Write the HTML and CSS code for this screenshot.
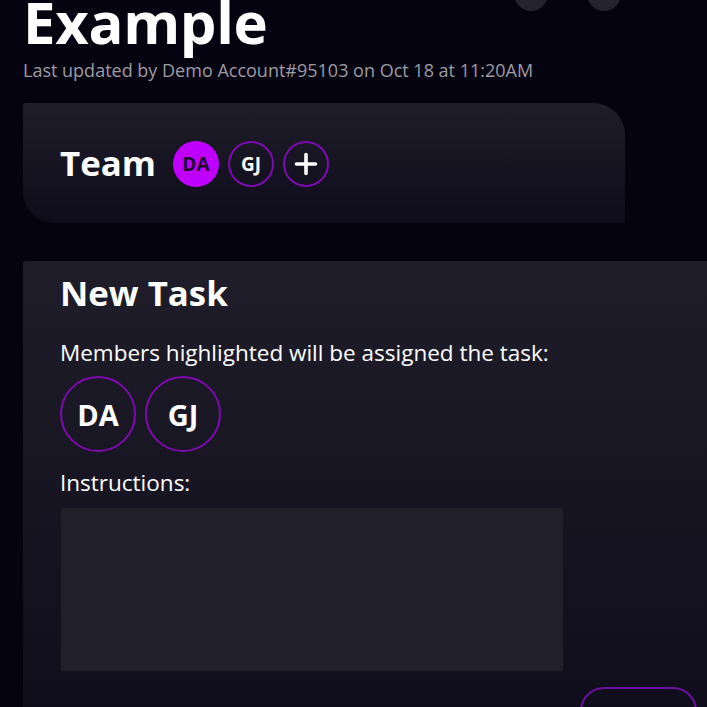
FILE: index.html
```html
<!DOCTYPE html>
<html>
<head>
<meta charset="utf-8">
<link rel="stylesheet" href="styles.css">
</head>
<body>
<div class="page">
  <header class="header">
    <div class="title-row">
      <h1 class="title">Example</h1>
      <div class="top-actions">
        <span class="round-btn"></span>
        <span class="round-btn"></span>
      </div>
    </div>
    <p class="updated">Last updated by Demo Account#95103 on Oct 18 at 11:20AM</p>
  </header>

  <section class="card team-card">
    <h2 class="card-title">Team</h2>
    <div class="avatars">
      <span class="avatar avatar-filled">DA</span>
      <span class="avatar">GJ</span>
      <span class="avatar avatar-add">
        <svg width="24" height="24" viewBox="0 0 24 24"><path d="M12 2.5v19M2.5 12h19" stroke="#fff" stroke-width="3.6" stroke-linecap="round"/></svg>
      </span>
    </div>
  </section>

  <section class="card task-card">
    <h2 class="card-title">New Task</h2>
    <p class="label members-label">Members highlighted will be assigned the task:</p>
    <div class="members">
      <span class="member">DA</span>
      <span class="member">GJ</span>
    </div>
    <p class="label instr-label">Instructions:</p>
    <textarea class="instructions"></textarea>
    <div class="actions">
      <button class="submit"></button>
    </div>
  </section>
</div>
</body>
</html>
```

FILE: styles.css
```css
* { box-sizing: border-box; }
html, body {
  margin: 0;
  background: #05030f;
  overflow: hidden;
  height: 100%;
}
body {
  font-family: "Open Sans", "Noto Sans", sans-serif;
  color: #fff;
}
.page {
  padding: 0 0 0 23px;
  margin-top: -16px;
  width: 760px;
}
.title-row {
  display: flex;
  align-items: flex-start;
}
.title {
  margin: 0;
  font-size: 58px;
  font-weight: 700;
  line-height: 76px;
  letter-spacing: -0.3px;
}
.top-actions {
  display: flex;
  gap: 39px;
  margin-left: 246px;
  margin-top: -7px;
}
.round-btn {
  width: 34px;
  height: 34px;
  border-radius: 50%;
  background: #25232e;
}
.updated {
  margin: -1px 0 0;
  font-size: 18px;
  line-height: 22px;
  color: #9d9ca3;
}
.card {
  background: linear-gradient(180deg, #1f1d29 0%, #0e0c1b 100%);
}
.team-card {
  margin-top: 22px;
  width: 602px;
  height: 120px;
  border-radius: 3px 32px 3px 32px;
  padding: 0 37px;
  display: flex;
  align-items: center;
  gap: 17px;
}
.card-title {
  margin: 0;
  font-size: 34.8px;
  font-weight: 700;
  line-height: 44px;
}
.avatars {
  display: flex;
  gap: 9px;
  padding-top: 2px;
}
.avatar {
  width: 46px;
  height: 46px;
  border-radius: 50%;
  border: 2px solid #7d0aae;
  display: flex;
  align-items: center;
  justify-content: center;
  font-weight: 700;
  font-size: 19px;
  color: #fff;
}
.avatar-filled {
  background: #bf00ff;
  border-color: #bf00ff;
  color: #1e0b2a;
}
.task-card {
  margin-top: 38px;
  width: 720px;
  border-radius: 3px 0 0 0;
  padding: 10px 37px 40px;
  background: linear-gradient(180deg, #1f1d29 0%, #0d0b1a 100%);
}
.label {
  margin: 0;
  font-size: 22.5px;
  line-height: 30px;
  color: #fff;
}
.members-label {
  margin-top: 23px;
}
.members {
  display: flex;
  gap: 9px;
  margin-top: 8px;
}
.member {
  width: 76px;
  height: 76px;
  border-radius: 50%;
  border: 2px solid #7d0aae;
  display: flex;
  align-items: center;
  justify-content: center;
  font-weight: 700;
  font-size: 29px;
}
.instr-label {
  margin-top: 16px;
}
.instructions {
  display: block;
  margin-top: 9px;
  width: 504px;
  height: 165px;
  background: #21202a;
  border: 1px solid #15141d;
  border-radius: 4px;
  resize: none;
}
.actions {
  margin-top: 15px;
  padding-left: 520px;
}
.submit {
  width: 117px;
  height: 50px;
  border-radius: 24px;
  background: transparent;
  border: 2px solid #6b0f9e;
}
```
